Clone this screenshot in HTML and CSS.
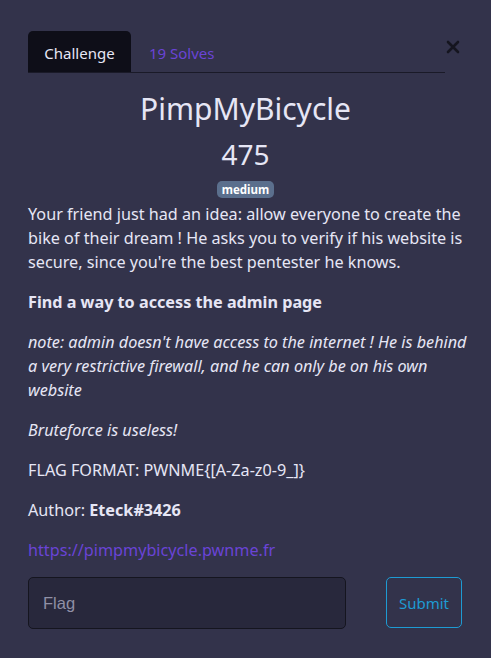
FILE: index.html
```html
<!DOCTYPE html>
<html>
<head>
<meta charset="utf-8">
<link rel="stylesheet" href="styles.css">
</head>
<body>
<div class="modal">
  <div class="head">
    <div class="tabs">
      <div class="tab active">Challenge</div>
      <div class="tab link">19 Solves</div>
    </div>
    <div class="close">
      <svg width="14" height="14" viewBox="0 0 14 14"><path d="M2 2 L12 12 M12 2 L2 12" stroke="#15151f" stroke-width="2.6" stroke-linecap="round" fill="none"/></svg>
    </div>
  </div>
  <h2 class="title">PimpMyBicycle</h2>
  <h3 class="points">475</h3>
  <div class="badge-row"><span class="badge">medium</span></div>
  <div class="desc">
    <p class="first">Your friend just had an idea: allow everyone to create the bike of their dream ! He asks you to verify if his website is secure, since you're the best pentester he knows.</p>
    <p><strong>Find a way to access the admin page</strong></p>
    <p><em>note: admin doesn't have access to the internet ! He is behind a very restrictive firewall, and he can only be on his own website</em></p>
    <p><em>Bruteforce is useless!</em></p>
    <p>FLAG FORMAT: PWNME{[A-Za-z0-9_]}</p>
    <p>Author: <strong>Eteck#3426</strong></p>
    <p><a class="url">https://pimpmybicycle.pwnme.fr</a></p>
  </div>
  <div class="form">
    <input class="flag" type="text" placeholder="Flag">
    <button class="submit">Submit</button>
  </div>
</div>
</body>
</html>
```
FILE: styles.css
```css
* { box-sizing: border-box; }
html, body { margin: 0; padding: 0; }
body {
  background: #33334b;
  color: #e6e6f5;
  font-family: "Noto Sans", "Open Sans", sans-serif;
  font-size: 16.2px;
  line-height: 24px;
}
.modal {
  padding: 31px 28px 0 28px;
}
.head {
  display: flex;
  align-items: flex-start;
}
.tabs {
  display: flex;
  width: 417px;
  border-bottom: 1px solid #1a1a28;
}
.tab {
  height: 41px;
  padding: 0 16px;
  display: flex;
  align-items: center;
  font-size: 15px;
  padding-top: 2px;
}
.tab.active {
  background: #0e0e18;
  border-radius: 5px 5px 0 0;
  color: #e6e6f5;
  width: 103px;
  justify-content: center;
  padding-left: 0;
  padding-right: 0;
}
.tab.link { color: #6a44d6; padding-left: 18px; }
.close {
  margin-left: 1px;
  margin-top: 9px;
  width: 16px;
  height: 14px;
  display: flex;
}
.title {
  margin: 16px 0 0 0;
  text-align: center;
  font-weight: 400;
  font-size: 30px;
  line-height: 40px;
}
.points {
  margin: 8px 0 0 0;
  text-align: center;
  font-weight: 400;
  font-size: 28px;
  line-height: 34px;
}
.badge-row { text-align: center; margin-top: 10px; height: 17px; line-height: 17px; }
.badge {
  display: inline-block;
  background: #5b6f8d;
  color: #fff;
  font-weight: 700;
  font-size: 11.5px;
  line-height: 17px;
  padding: 0 5px;
  border-radius: 5px;
  vertical-align: top;
}
.desc { margin-right: -8px; }
.desc p { margin: 0 0 16px 0; }
.desc p.first { margin-top: 4px; }
.desc strong { font-weight: 700; }
.url { color: #6a44d6; }
.form {
  display: flex;
  gap: 40px;
  margin-top: -1px;
}
.flag {
  width: 318px;
  height: 52px;
  background: #28283c;
  border: 1px solid #15151f;
  border-radius: 5px;
  padding: 0 14px;
  font-family: "Liberation Sans", Arial, sans-serif;
  font-size: 16.5px;
  color: #e6e6f5;
}
.flag::placeholder { color: #9090a6; }
.submit {
  width: 76px;
  height: 51px;
  background: transparent;
  border: 1px solid #1e9bd3;
  border-radius: 5px;
  color: #1e9bd3;
  font-family: "Noto Sans", "Open Sans", sans-serif;
  font-size: 15px;
}
```
